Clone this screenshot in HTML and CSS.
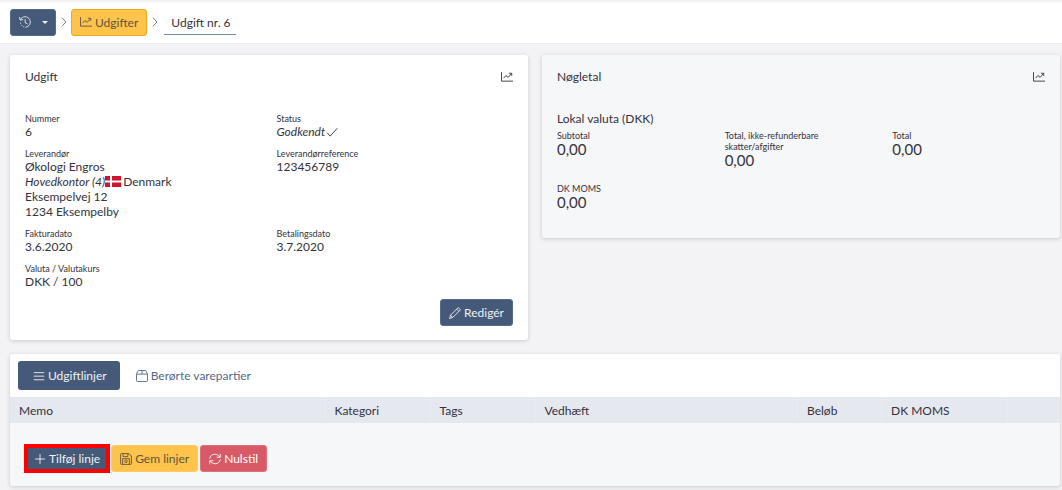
FILE: index.html
```html
<!DOCTYPE html>
<html lang="da">
<head>
<meta charset="utf-8">
<title>Udgift nr. 6</title>
<link rel="stylesheet" href="styles.css">
</head>
<body>
<svg class="sprite" aria-hidden="true">
  <symbol id="history" viewBox="0 0 16 16"><path d="M2.2 4.2A7 7 0 1 1 8.5 15M.8 1.4l.6 4.1 4.1-.7M8.2 4.2v4.6l3.2 1.9M2 8.8l.3 1.5M3.200 12.1l1 1.1M5.600 14.2l1.300.5"/></symbol>
  <symbol id="chart" viewBox="0 0 16 16"><path d="M.7 1.500v12H16M3.500 9.500l3-3.500 3 2.500L14 3.500M10.500 3H14.300V6.500"/></symbol>
  <symbol id="chevron" viewBox="0 0 6 10"><path d="M1 .8 5 5 1 9.200"/></symbol>
  <symbol id="check" viewBox="0 0 16 16"><path d="M1.500 9l4 4.500L15 3"/></symbol>
  <symbol id="pencil" viewBox="0 0 16 16"><path d="M12.300.7l3 3L5 14 .8 15.300 2 11zM10.200 2.800l3 3M2 11l1.200.8.3 1.200L5 14"/></symbol>
  <symbol id="list" viewBox="0 0 16 16"><path d="M1 3.500h14M1 8.200h14M1 13h14"/></symbol>
  <symbol id="box" viewBox="0 0 16 16"><path d="M.7 5.500 2.500 1.400Q2.800.7 3.500.7h9q.7 0 1 .7L15.300 5.500v8.800q0 1-1 1H1.700q-1 0-1-1zM.7 5.500h14.600M8 .7V5.500"/></symbol>
  <symbol id="plus" viewBox="0 0 16 16"><path d="M8 1.500v13M1.500 8h13"/></symbol>
  <symbol id="save" viewBox="0 0 16 16"><path d="M2 .8h10l3.200 3.200V14q0 1.200-1.200 1.200H2Q.8 15.200.8 14V2Q.8.8 2 .8zM4 .8v4h6.500v-4M3.500 15V7.500h9V15"/><circle cx="8" cy="11" r="1.700"/></symbol>
  <symbol id="refresh" viewBox="0 0 16 16"><path d="M1 7.500C1.500 4 4 1.700 7.500 1.700c3 0 5.500 1.500 6.800 3.700M15 1v4.700h-4.700M15 8.500c-.5 3.500-3 5.800-6.500 5.800-3 0-5.500-1.500-6.800-3.700M1 15v-4.700h4.700"/></symbol>
</svg>

<header class="topbar">
  <button class="btn btn-primary" type="button" aria-label="Historik"><svg class="icon"><use href="#history"/></svg><span class="caret"></span></button>
  <svg class="chevron"><use href="#chevron"/></svg>
  <a class="btn btn-warning btn-outlined" href="#"><svg class="icon"><use href="#chart"/></svg>Udgifter</a>
  <svg class="chevron"><use href="#chevron"/></svg>
  <span class="current">Udgift nr. 6</span>
</header>

<main class="page">
  <section class="card details">
    <div class="card-head"><h2>Udgift</h2><svg class="icon"><use href="#chart"/></svg></div>
    <dl class="fields">
      <div><dt>Nummer</dt><dd>6</dd></div>
      <div><dt>Status</dt><dd class="status"><em>Godkendt</em><svg class="icon"><use href="#check"/></svg></dd></div>
      <div>
        <dt>Leverandør</dt>
        <dd>Økologi Engros</dd>
        <dd class="office"><em>Hovedkontor (4)</em><svg class="flag" viewBox="0 0 16 11"><path fill="#d0142c" d="M0 0h16v11H0z"/><path fill="#fff" d="M5 0h2v11H5zM0 4.500h16v2H0z"/></svg><span>Denmark</span></dd>
        <dd>Eksempelvej 12</dd>
        <dd>1234 Eksempelby</dd>
      </div>
      <div><dt>Leverandørreference</dt><dd>123456789</dd></div>
      <div><dt>Fakturadato</dt><dd>3.6.2020</dd></div>
      <div><dt>Betalingsdato</dt><dd>3.7.2020</dd></div>
      <div><dt>Valuta / Valutakurs</dt><dd>DKK / 100</dd></div>
    </dl>
    <button class="btn btn-primary edit" type="button"><svg class="icon"><use href="#pencil"/></svg>Redigér</button>
  </section>

  <section class="card keys">
    <div class="card-head"><h2>Nøgletal</h2><svg class="icon"><use href="#chart"/></svg></div>
    <h3>Lokal valuta (DKK)</h3>
    <dl class="figures">
      <div><dt>Subtotal</dt><dd>0,00</dd></div>
      <div><dt>Total, ikke-refunderbare skatter/afgifter</dt><dd>0,00</dd></div>
      <div><dt>Total</dt><dd>0,00</dd></div>
      <div><dt>DK MOMS</dt><dd>0,00</dd></div>
    </dl>
  </section>

  <section class="card lines">
    <nav class="tabs">
      <a class="tab active" href="#"><svg class="icon"><use href="#list"/></svg>Udgiftlinjer</a>
      <a class="tab" href="#"><svg class="icon"><use href="#box"/></svg>Berørte varepartier</a>
    </nav>
    <table>
      <colgroup><col class="w30"><col class="w10"><col class="w10"><col class="w25"><col class="w8"><col class="w12"><col class="w5"></colgroup>
      <thead><tr><th>Memo</th><th>Kategori</th><th>Tags</th><th>Vedhæft</th><th>Beløb</th><th>DK MOMS</th><th></th></tr></thead>
    </table>
    <div class="actions">
      <button class="btn btn-primary marked" type="button"><svg class="icon"><use href="#plus"/></svg>Tilføj linje</button>
      <button class="btn btn-warning" type="button"><svg class="icon"><use href="#save"/></svg>Gem linjer</button>
      <button class="btn btn-danger" type="button"><svg class="icon"><use href="#refresh"/></svg>Nulstil</button>
    </div>
  </section>
</main>
</body>
</html>
```
FILE: styles.css
```css
* { box-sizing: border-box; }

body {
  margin: 0;
  background: #f3f3f5;
  color: #34323c;
  font: 12px/15px Lato, "Open Sans", sans-serif;
}

h2, h3, dl, dd { margin: 0; font-size: 12px; font-weight: 400; }
a { text-decoration: none; }
.sprite { display: none; }

.icon {
  flex: none;
  width: 12px;
  height: 12px;
  fill: none;
  stroke: currentColor;
  stroke-width: 1.2;
}

.topbar {
  display: flex;
  align-items: center;
  height: 44px;
  padding: 1px 10px 0;
  background: linear-gradient(#efeff1, #fff 4px);
  border-bottom: 1px solid #ebebed;
}

.chevron {
  width: 6px;
  height: 10px;
  margin: 0 4px 0 5px;
  fill: none;
  stroke: #777;
}

.current {
  margin-left: 2px;
  padding: 5px 5px 4px 7px;
  border-bottom: 1px solid #7189a6;
}

.btn {
  display: flex;
  align-items: center;
  gap: 3px;
  height: 27px;
  padding: 0 8px;
  border: 1px solid;
  border-radius: 3px;
  font: inherit;
}

.btn-primary { background: #455a78; border-color: #556b89; color: #edf1f6; }
.btn-warning { background: #fec34a; border-color: #ffcb61; color: #5d5542; }
.btn-outlined { border-color: #f0a91f; }
.btn-danger { background: #d75a66; border-color: #df707a; color: #fff; }

.caret {
  margin: 0 -1px 0 8px;
  border: 3px solid transparent;
  border-top-color: currentColor;
  border-bottom: 0;
}

.page {
  display: grid;
  grid-template-columns: 1fr 1fr;
  gap: 14px;
  align-items: start;
  padding: 11px 2px 4px 10px;
}

.card {
  border-radius: 3px;
  background: #fff;
  box-shadow: 0 1px 4px rgba(40, 40, 60, .2);
}

.details { padding: 14px 15px; }
.keys { padding: 14px 15px 27px; background: #f6f7f9; }

.card-head {
  display: flex;
  justify-content: space-between;
  align-items: center;
}

.fields {
  display: grid;
  grid-template-columns: 1fr 1fr;
  gap: 9px 15px;
  margin: 29px 0 10px;
}

dt { font-size: 9px; line-height: 11px; }

.status, .office { display: flex; align-items: center; }
.status { gap: 1px; }
.office { gap: 2px; }
.flag { width: 16px; height: 11px; margin-left: -2px; }

.edit { margin-left: auto; }

.keys h3 { margin: 27px 0 4px; }

.figures {
  display: grid;
  grid-template-columns: repeat(3, 1fr);
  gap: 14px 15px;
}
.figures dd { font-size: 15px; line-height: 17px; }

.lines { grid-column: 1 / -1; background: #f6f7f9; }

.tabs {
  display: flex;
  gap: 1px;
  padding: 7px 8px;
  background: #fff;
  border-radius: 3px 3px 0 0;
}

.tab {
  display: flex;
  align-items: center;
  gap: 3px;
  height: 29px;
  padding: 0 13px 0 15px;
  border-radius: 3px;
  color: #52698a;
}
.tab.active { background: #455a78; color: #edf1f6; }

table { width: 100%; table-layout: fixed; border-collapse: collapse; }
th {
  height: 26px;
  padding: 0 9px;
  background: #e6e8ef;
  font-weight: 400;
  text-align: left;
}
th + th { border-left: 1px solid #e9ebf2; }

.w30 { width: 30%; }
.w25 { width: 25%; }
.w12 { width: 12%; }
.w10 { width: 10%; }
.w8 { width: 8%; }
.w5 { width: 5%; }

.actions { display: flex; gap: 2px; padding: 22px 15px 14px; }

.marked { position: relative; }
.marked::after {
  content: "";
  position: absolute;
  inset: -2px;
  border: 4px solid #fe0000;
}
```
